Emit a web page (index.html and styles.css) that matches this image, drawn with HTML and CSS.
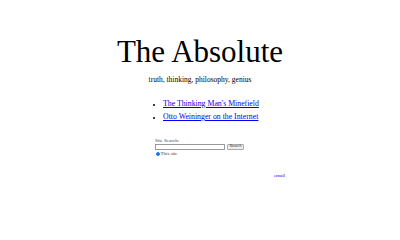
FILE: index.html
```html
<!DOCTYPE html>
<html>
<head>
<meta charset="utf-8">
<link rel="stylesheet" href="styles.css">
</head>
<body>
<div class="page">
  <h1 class="title">The Absolute</h1>
  <p class="tagline">truth, thinking, philosophy, genius</p>
  <div class="body">
    <ul class="links">
      <li><a href="#">The Thinking Man's Minefield</a></li>
      <li><a href="#">Otto Weininger on the Internet</a></li>
    </ul>
    <form class="search">
      <div class="label">Site Search:</div>
      <div class="row">
        <input type="text" class="field">
        <button type="button" class="btn">Search</button>
      </div>
      <label class="radio"><input type="radio" checked> This site</label>
    </form>
    <div class="email"><a href="#">email</a></div>
  </div>
</div>
</body>
</html>
```
FILE: styles.css
```css
html, body { margin: 0; padding: 0; background: #fff; }
body { font-family: "Liberation Serif", "Times New Roman", serif; color: #000; }
.page { width: 400px; display: flex; flex-direction: column; align-items: center; }
.title { font-weight: normal; font-size: 31px; line-height: 1; margin: 36px 0 0; }
.tagline { font-size: 7.5px; margin: 8px 0 0; }
.body { align-self: flex-start; width: 130px; margin-left: 155px; display: flex; flex-direction: column; }
.links { margin: 13px 0 0 0; padding: 0 0 0 8px; font-size: 7.8px; line-height: 13px; list-style: disc; }
.links li::marker { font-size: 6px; }
.links a { color: #00e; }
.search { margin: 15px 0 0 0; width: 92px; font-size: 5px; color: #444; }
.label { line-height: 6px; }
.row { display: flex; gap: 2px; align-items: center; }
.field { width: 70px; height: 6px; box-sizing: border-box; border: 0.6px solid #999; padding: 0; margin: 0; }
.btn { font-family: "Liberation Sans", sans-serif; font-size: 3.8px; width: 17px; height: 6px; padding: 0; margin: 0; border: 0.6px solid #aaa; border-radius: 1px; background: #eee; line-height: 1; color: #333; }
.radio { display: flex; align-items: center; gap: 1px; line-height: 7px; margin-left: 0.5px; }
.radio input { width: 4px; height: 4px; margin: 0; accent-color: #1a73e8; }
.email { text-align: right; font-size: 5px; margin: 16px 0 0 0; }
.email a { color: #00e; }
```
